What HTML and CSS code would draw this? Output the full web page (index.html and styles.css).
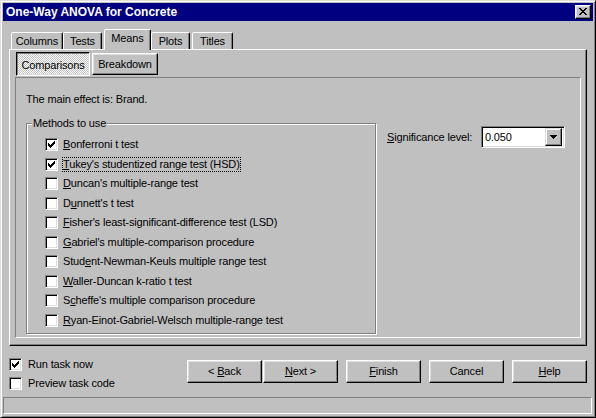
FILE: index.html
```html
<!DOCTYPE html>
<html>
<head>
<meta charset="utf-8">
<title>One-Way ANOVA for Concrete</title>
<link rel="stylesheet" href="styles.css">
</head>
<body>
<div class="window">
  <div class="titlebar">
    <span class="title">One-Way ANOVA for Concrete</span>
    <div class="close"><svg width="8" height="7" viewBox="0 0 8 7" shape-rendering="crispEdges"><path d="M0 0h2v1H0z M6 0h2v1H6z M1 1h2v1H1z M5 1h2v1H5z M2 2h4v1H2z M3 3h2v1H3z M2 4h4v1H2z M1 5h2v1H1z M5 5h2v1H5z M0 6h2v1H0z M6 6h2v1H6z"/></svg></div>
  </div>
  <div class="main">
    <div class="tabs">
      <div class="tab t-columns">Columns</div>
      <div class="tab t-tests">Tests</div>
      <div class="tab t-means sel">Means</div>
      <div class="tab t-plots">Plots</div>
      <div class="tab t-titles">Titles</div>
    </div>
    <div class="panel">
      <div class="subtabs">
        <div class="subtab pressed">Comparisons</div>
        <div class="subtab b-break">Breakdown</div>
      </div>
      <div class="page">
        <div class="left">
          <p class="effect">The main effect is: Brand.</p>
          <div class="group">
            <span class="legend">Methods to use</span>
            <div class="row"><span class="cb"><svg width="7" height="7" viewBox="0 0 7 7" shape-rendering="crispEdges"><path d="M6 0h1v1H6z M5 1h2v1H5z M0 2h1v1H0z M4 2h3v1H4z M0 3h2v1H0z M3 3h3v1H3z M0 4h5v1H0z M1 5h3v1H1z M2 6h1v1H2z"/></svg></span><span class="lbl"><u>B</u>onferroni t test</span></div>
            <div class="row"><span class="cb"><svg width="7" height="7" viewBox="0 0 7 7" shape-rendering="crispEdges"><path d="M6 0h1v1H6z M5 1h2v1H5z M0 2h1v1H0z M4 2h3v1H4z M0 3h2v1H0z M3 3h3v1H3z M0 4h5v1H0z M1 5h3v1H1z M2 6h1v1H2z"/></svg></span><span class="lbl focus"><u>T</u>ukey's studentized range test (HSD)</span></div>
            <div class="row"><span class="cb"></span><span class="lbl"><u>D</u>uncan's multiple-range test</span></div>
            <div class="row"><span class="cb"></span><span class="lbl">D<u>u</u>nnett's t test</span></div>
            <div class="row"><span class="cb"></span><span class="lbl"><u>F</u>isher's least-significant-difference test (LSD)</span></div>
            <div class="row"><span class="cb"></span><span class="lbl"><u>G</u>abriel's multiple-comparison procedure</span></div>
            <div class="row"><span class="cb"></span><span class="lbl">Stud<u>e</u>nt-Newman-Keuls multiple range test</span></div>
            <div class="row"><span class="cb"></span><span class="lbl"><u>W</u>aller-Duncan k-ratio t test</span></div>
            <div class="row"><span class="cb"></span><span class="lbl">S<u>c</u>heffe's multiple comparison procedure</span></div>
            <div class="row"><span class="cb"></span><span class="lbl"><u>R</u>yan-Einot-Gabriel-Welsch multiple-range test</span></div>
          </div>
        </div>
        <div class="right">
          <span class="sig"><u>S</u>ignificance level:</span>
          <div class="combo">
            <span class="val">0.050</span>
            <span class="drop"><svg width="7" height="4" viewBox="0 0 7 4" shape-rendering="crispEdges"><path d="M0 0h7v1H0z M1 1h5v1H1z M2 2h3v1H2z M3 3h1v1H3z"/></svg></span>
          </div>
        </div>
      </div>
    </div>
  </div>
  <div class="footer">
    <div class="checks">
      <div class="frow"><span class="cb"><svg width="7" height="7" viewBox="0 0 7 7" shape-rendering="crispEdges"><path d="M6 0h1v1H6z M5 1h2v1H5z M0 2h1v1H0z M4 2h3v1H4z M0 3h2v1H0z M3 3h3v1H3z M0 4h5v1H0z M1 5h3v1H1z M2 6h1v1H2z"/></svg></span><span class="flbl">Run task now</span></div>
      <div class="frow"><span class="cb"></span><span class="flbl">Preview task code</span></div>
    </div>
    <div class="buttons">
      <div class="btn"><span>&lt; <u>B</u>ack</span></div>
      <div class="btn b-next"><span><u>N</u>ext &gt;</span></div>
      <div class="btn b-gap"><span><u>F</u>inish</span></div>
      <div class="btn b-gap"><span>Cancel</span></div>
      <div class="btn b-gap"><span><u>H</u>elp</span></div>
    </div>
  </div>
  <div class="status"></div>
</div>
</body>
</html>
```
FILE: styles.css
```css
* { box-sizing: border-box; }
html, body { margin: 0; padding: 0; }
body {
  width: 596px;
  height: 418px;
  overflow: hidden;
  background: #c0c0c0;
  font-family: "Liberation Sans", Arial, sans-serif;
  font-size: 11px;
  letter-spacing: -0.15px;
  color: #000;
}
u { text-decoration: underline; text-underline-offset: 1px; }

.window {
  width: 596px;
  height: 418px;
  border: 1px solid;
  border-color: #dfdfdf #000 #000 #dfdfdf;
  box-shadow: inset 1px 1px #fff, inset -1px -1px #808080;
  padding: 2px;
  display: flex;
  flex-direction: column;
}

.titlebar {
  height: 18px;
  flex: none;
  background: #000080;
  display: flex;
  align-items: center;
  justify-content: space-between;
  padding: 0 2px 0 3px;
}
.title { color: #fff; font-weight: bold; font-size: 12px; letter-spacing: 0; }
.close {
  width: 16px;
  height: 14px;
  border: 1px solid;
  border-color: #fff #000 #000 #fff;
  box-shadow: inset -1px -1px #808080, inset 1px 1px #dfdfdf;
  background: #c0c0c0;
  padding: 2px 0 0 3px;
  display: flex;
  align-items: flex-start;
}
.close svg { display: block; }

.main { padding: 8px 0 0 6px; flex: none; }

.tabs {
  display: flex;
  align-items: flex-end;
  height: 20px;
  position: relative;
  z-index: 1;
}
.tab {
  height: 17px;
  border: 1px solid;
  border-bottom: none;
  border-color: #fff #000 transparent #fff;
  box-shadow: inset -1px 0 #808080;
  border-radius: 2px 2px 0 0;
  display: flex;
  align-items: center;
  justify-content: center;
  padding-bottom: 1px;
  background: #c0c0c0;
}
.tab.sel { height: 21px; margin-bottom: -1px; padding-bottom: 4px; }
.t-columns { width: 52px; margin-left: 2px; }
.t-tests { width: 39px; }
.t-means { width: 47px; margin-left: 2px; }
.t-plots { width: 39px; }
.t-titles { width: 41px; margin-left: 2px; }

.panel {
  width: 578px;
  height: 297px;
  border: 1px solid;
  border-color: #fff #000 #000 #fff;
  box-shadow: inset -1px -1px #808080;
  padding: 2px 0 0 5px;
}

.subtabs {
  display: flex;
  align-items: flex-start;
  height: 25px;
  margin-left: 1px;
}
.subtab {
  width: 66px;
  height: 22px;
  margin-top: 1px;
  margin-left: 2px;
  border: 1px solid;
  border-color: #fff #000 #000 #fff;
  box-shadow: inset -1px -1px #808080, inset 1px 1px #dfdfdf;
  display: flex;
  align-items: center;
  justify-content: center;
}
.subtab.pressed {
  width: 74px;
  height: 24px;
  margin: 0;
  border-color: #000 #fff #fff #000;
  box-shadow: inset 1px 1px #808080, inset -1px -1px #dfdfdf;
  background: repeating-conic-gradient(#fff 0 25%, #c0c0c0 0 50%) 0 0 / 2px 2px;
  padding-top: 1px;
}

.page {
  width: 566px;
  height: 261px;
  border: 1px solid;
  border-color: #808080 #fff #fff #808080;
  display: flex;
  align-items: flex-start;
  padding: 15px 0 0 10px;
}

.left { width: 350px; flex: none; }
.effect { margin: 0; line-height: 13px; height: 13px; }

.group {
  margin-top: 17px;
  width: 350px;
  height: 211px;
  border: 1px solid #808080;
  box-shadow: 1px 1px #fff, inset 1px 1px #fff;
  padding-left: 18px;
}
.legend {
  display: block;
  width: max-content;
  margin: -7px 0 0 -13px;
  padding: 0 1px;
  line-height: 13px;
  background: #c0c0c0;
}
.row {
  display: flex;
  align-items: center;
  height: 15px;
  margin-bottom: 4.5px;
}
.legend + .row { margin-top: 7px; }

.cb {
  width: 13px;
  height: 13px;
  flex: none;
  border: 1px solid;
  border-color: #808080 #fff #fff #808080;
  box-shadow: inset 1px 1px #000, inset -1px -1px #dfdfdf;
  background: #fff;
  padding: 2px;
  display: flex;
}
.cb svg { display: block; }

.lbl {
  margin-left: 4px;
  border: 1px dotted transparent;
  line-height: 13px;
  white-space: nowrap;
}
.lbl.focus { border-color: #000; }

.right {
  margin: 33px 0 0 11px;
  display: flex;
  align-items: center;
}
.sig { white-space: nowrap; width: 94px; }
.combo {
  width: 84px;
  height: 22px;
  border: 1px solid;
  border-color: #808080 #fff #fff #808080;
  box-shadow: inset 1px 1px #000, inset -1px -1px #dfdfdf;
  background: #fff;
  padding: 2px;
  display: flex;
  justify-content: space-between;
  align-items: center;
}
.val { padding-left: 1px; }
.drop {
  width: 17px;
  height: 18px;
  border: 1px solid;
  border-color: #dfdfdf #000 #000 #dfdfdf;
  box-shadow: inset -1px -1px #808080, inset 1px 1px #fff;
  background: #c0c0c0;
  display: flex;
  align-items: center;
  justify-content: center;
}
.drop svg { display: block; }

.footer {
  height: 51px;
  flex: none;
  display: flex;
  padding-left: 6px;
}
.checks { padding-top: 11px; }
.frow {
  display: flex;
  align-items: center;
  height: 15px;
  margin-bottom: 4px;
}
.flbl { margin-left: 6px; line-height: 13px; white-space: nowrap; }

.buttons {
  margin: 14px 6px 0 auto;
  display: flex;
  align-items: flex-start;
}
.btn {
  width: 75px;
  height: 23px;
  border: 1px solid;
  border-color: #fff #000 #000 #fff;
  box-shadow: inset -1px -1px #808080, inset 1px 1px #dfdfdf;
  display: flex;
  align-items: center;
  justify-content: center;
  padding-bottom: 1px;
  white-space: pre;
}
.b-next { margin-left: 1px; }
.b-gap { margin-left: 8px; }

.status {
  height: 17px;
  flex: none;
  margin-right: 1px;
  border: 1px solid;
  border-color: #808080 #fff #fff #808080;
}
```
